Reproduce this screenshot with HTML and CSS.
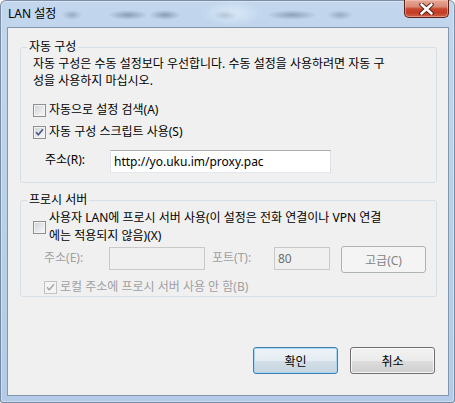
FILE: index.html
```html
<!DOCTYPE html>
<html lang="ko">
<head>
<meta charset="utf-8">
<title>LAN 설정</title>
<link rel="stylesheet" href="styles.css">
</head>
<body>
<div class="window">
  <div class="titlebar">
    <span class="title">LAN 설정</span>
    <div class="close">
      <svg width="15" height="12" viewBox="0 0 15 12">
        <path d="M2.5 1.5 L12.5 10.5 M12.5 1.5 L2.5 10.5" stroke="#4a1a12" stroke-width="4.4" stroke-linecap="round" fill="none"/>
        <path d="M2.5 1.5 L12.5 10.5 M12.5 1.5 L2.5 10.5" stroke="#ffffff" stroke-width="2.6" stroke-linecap="round" fill="none"/>
      </svg>
    </div>
  </div>
  <div class="client">
    <fieldset class="group group-auto">
      <legend>자동 구성</legend>
      <p class="desc">자동 구성은 수동 설정보다 우선합니다. 수동 설정을 사용하려면 자동 구<br>성을 사용하지 마십시오.</p>
      <div class="check first">
        <span class="box"></span>
        <span class="label">자동으로 설정 검색(A)</span>
      </div>
      <div class="check second">
        <span class="box">
          <svg width="11" height="11" viewBox="0 0 11 11"><path d="M2 5.2 L4.3 7.8 L9 2.2" stroke="#4b5d84" stroke-width="1.7" fill="none"/></svg>
        </span>
        <span class="label">자동 구성 스크립트 사용(S)</span>
      </div>
      <div class="field">
        <span class="flabel">주소(R):</span>
        <span class="input url">http://yo.uku.im/proxy.pac</span>
      </div>
    </fieldset>

    <fieldset class="group group-proxy">
      <legend>프로시 서버</legend>
      <div class="check multi">
        <span class="box"></span>
        <span class="label">사용자 LAN에 프로시 서버 사용(이 설정은 전화 연결이나 VPN 연결<br>에는 적용되지 않음)(X)</span>
      </div>
      <div class="proxy-row">
        <span class="flabel disabled">주소(E):</span>
        <span class="input addr disabled-input"></span>
        <span class="plabel disabled">포트(T):</span>
        <span class="input port disabled-input">80</span>
        <span class="btn adv">고급(C)</span>
      </div>
      <div class="check bypass">
        <span class="box box-disabled">
          <svg width="11" height="11" viewBox="0 0 11 11"><path d="M2 5.2 L4.3 7.8 L9 2.2" stroke="#a9a9a9" stroke-width="1.5" fill="none"/></svg>
        </span>
        <span class="label disabled">로컬 주소에 프로시 서버 사용 안 함(B)</span>
      </div>
    </fieldset>

    <div class="buttons">
      <span class="btn default">확인</span>
      <span class="btn">취소</span>
    </div>
  </div>
</div>
</body>
</html>
```
FILE: styles.css
```css
html, body {
  margin: 0;
  padding: 0;
  background: #ffffff;
}

.window {
  width: 455px;
  height: 403px;
  box-sizing: border-box;
  display: flex;
  flex-direction: column;
  padding: 0 6px 7px 7px;
  border-radius: 6px 6px 3px 3px;
  background: linear-gradient(to bottom, #c2d7ed 0%, #bad1ea 50%, #b3cbe6 100%);
  box-shadow: inset 0 0 0 1px rgba(50, 70, 100, 0.55), inset 0 0 0 2px rgba(255, 255, 255, 0.35);
  font-family: "Noto Sans", "Noto Sans CJK KR", sans-serif;
  font-size: 12px;
  color: #000;
  overflow: hidden;
}

.titlebar {
  height: 27px;
  flex: none;
  display: flex;
  align-items: flex-start;
  margin: 0 -6px 0 -7px;
  padding: 0 6px 0 8px;
  background:
    radial-gradient(ellipse 10px 5px at 72px 15px, rgba(100, 118, 140, 0.45), transparent),
    radial-gradient(ellipse 20px 5px at 128px 15px, rgba(100, 118, 140, 0.6), transparent),
    radial-gradient(ellipse 16px 5px at 165px 15px, rgba(100, 118, 140, 0.6), transparent),
    radial-gradient(ellipse 30px 13px at 232px 13px, rgba(235, 245, 255, 0.6), transparent),
    radial-gradient(ellipse 12px 5px at 226px 15px, rgba(100, 118, 140, 0.55), transparent),
    radial-gradient(ellipse 25px 5px at 292px 15px, rgba(100, 118, 140, 0.55), transparent),
    radial-gradient(ellipse 13px 5px at 340px 15px, rgba(100, 118, 140, 0.45), transparent);
}

.title {
  line-height: 16px;
  margin-top: 6px;
  color: #000;
}

.close {
  margin-left: auto;
  width: 45px;
  height: 18px;
  box-sizing: border-box;
  display: flex;
  align-items: center;
  justify-content: center;
  border: 1px solid #5a2218;
  border-top: none;
  border-radius: 0 0 5px 5px;
  background: linear-gradient(to bottom, #e7a897 0%, #d98a76 40%, #c8482f 52%, #c33d25 75%, #d2624a 100%);
  box-shadow: inset 0 0 0 1px rgba(255, 210, 200, 0.45);
}

.client {
  flex: 1;
  display: flex;
  flex-direction: column;
  background: #f0f0f0;
  border: 1px solid #8396ad;
}

.group {
  margin: 0 11px 0 12px;
  padding: 0 0 0 0;
  border: 1px solid #d5dfe5;
  border-radius: 3px;
  min-width: 0;
}

.group legend {
  margin-left: 6px;
  padding: 0 2px;
  line-height: 16px;
}

.group-auto {
  margin-top: 11px;
  padding-bottom: 9px;
}

.group-proxy {
  margin-top: 9px;
  padding-bottom: 1px;
}

.desc {
  margin: 0;
  padding-left: 12px;
  line-height: 17px;
}

.check {
  display: flex;
  align-items: center;
  padding-left: 12px;
  line-height: 16px;
}

.check.first {
  margin-top: 13px;
}

.check.second {
  margin-top: 6px;
}

.check.multi {
  margin-top: 1px;
  line-height: 18px;
}

.check.bypass {
  margin-top: 6px;
  padding-left: 23px;
}

.box {
  flex: none;
  width: 13px;
  height: 13px;
  box-sizing: border-box;
  border: 1px solid #8e8f8f;
  background: linear-gradient(135deg, #cdd1d7 0%, #e6e8ea 55%, #f8f8f8 100%);
  box-shadow: inset 0 0 0 1px #f4f4f4;
  margin-right: 3px;
  margin-top: 1px;
}

.box svg {
  display: block;
}

.box-disabled {
  border-color: #c3c3c3;
  background: #f4f4f4;
}

.label.disabled,
.disabled {
  color: #a0a0a0;
}

.field {
  display: flex;
  align-items: flex-start;
  margin-top: 10px;
  padding-left: 24px;
}

.flabel {
  width: 65px;
  flex: none;
  line-height: 16px;
  margin-top: 2px;
}

.input {
  box-sizing: border-box;
  height: 23px;
  border: 1px solid #abadb3;
  border-left-color: #e2e3ea;
  border-right-color: #dbdfe6;
  border-bottom-color: #e3e9ef;
  background: #fff;
  line-height: 21px;
  padding-left: 3px;
}

.input.url {
  width: 221px;
}

.proxy-row {
  display: flex;
  align-items: flex-start;
  margin-top: 1px;
  padding-left: 23px;
}

.proxy-row .flabel {
  margin-top: 4px;
}

.disabled-input {
  background: #f0f0f0;
  border-color: #c9c9c9;
  color: #6d6d6d;
  margin-top: 1px;
}

.input.addr {
  width: 96px;
}

.plabel {
  width: 62px;
  flex: none;
  margin-left: 7px;
  margin-top: 4px;
  line-height: 16px;
}

.input.port {
  width: 56px;
}

.btn {
  box-sizing: border-box;
  width: 85px;
  height: 27px;
  display: flex;
  align-items: center;
  justify-content: center;
  border: 1px solid #707070;
  border-radius: 3px;
  background: linear-gradient(to bottom, #f2f2f2 0%, #ebebeb 50%, #dddddd 51%, #cfcfcf 100%);
  box-shadow: inset 0 0 0 1px rgba(252, 252, 252, 0.85);
  color: #000;
}

.btn.adv {
  margin-left: 11px;
  border-color: #adb2b5;
  background: #f4f4f4;
  box-shadow: none;
  color: #838383;
}

.btn.default {
  border-color: #3c7fb1;
  background: linear-gradient(to bottom, #eef3f7 0%, #e4ecf2 50%, #d3dfe8 51%, #c6d5e0 100%);
  box-shadow: inset 0 0 0 1px #a8d8f3;
}

.buttons {
  display: flex;
  justify-content: flex-end;
  gap: 12px;
  margin-top: 50px;
  padding-right: 13px;
}
```
